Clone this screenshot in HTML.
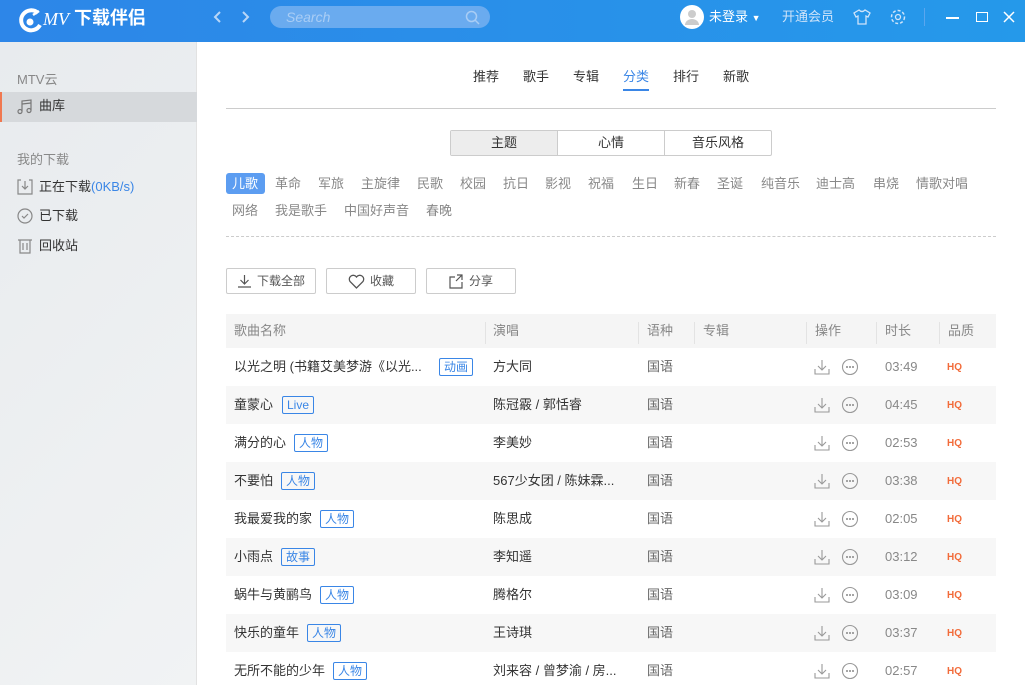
<!DOCTYPE html><html><head><meta charset="utf-8"><style>
*{margin:0;padding:0;box-sizing:border-box}
body{width:1025px;height:685px;overflow:hidden;font-family:"Liberation Sans","Noto Sans CJK SC",sans-serif;font-size:13px;line-height:16px;color:#333;background:#fff;position:relative}
.abs{position:absolute}
#top{left:0;top:0;width:1025px;height:42px;background:linear-gradient(90deg,#2d86e8,#2599ea);color:#fff}
#side{left:0;top:42px;width:197px;height:643px;background:linear-gradient(135deg,#e8ebee,#f1f3f4);border-right:1px solid #e2e2e2}
.t{position:absolute;white-space:nowrap}
.tag{position:absolute;color:#888;font-size:13px}
.btn{position:absolute;top:268px;height:26px;border:1px solid #ccc;border-radius:2px;font-size:12px;color:#555;display:flex;align-items:center;justify-content:center;gap:5px}
.row{position:absolute;left:226px;width:770px;height:38px}
.row span{position:absolute;top:11px;white-space:nowrap}
.row svg{position:absolute}
.badge{border:1px solid #3a86e6;color:#3a86e6;border-radius:2px;font-size:12px;padding:0 4px;line-height:16px;top:10px!important}
.hq{color:#f26b3a;font-size:10px;font-weight:bold}
.sep{position:absolute;top:322px;width:1px;height:22px;background:#e3e3e3}
</style></head><body>
<div id="top" class="abs">
<svg class="abs" style="left:16px;top:7px" width="28" height="28" viewBox="0 0 28 28"><path d="M22 6A10 10 0 1 0 24 18" fill="none" stroke="#fff" stroke-width="4"/><circle cx="14" cy="15" r="3.5" fill="#fff"/><path d="M17 8l6-4" stroke="#fff" stroke-width="2.5"/></svg>
<div class="t" style="left:43px;top:9px;font-size:18px;line-height:20px;font-style:italic;font-family:'Liberation Serif',serif">MV</div>
<div class="t" style="left:74px;top:7px;font-size:18px;line-height:22px;font-weight:bold">下载伴侣</div>
<svg class="abs" style="left:213px;top:10px" width="10" height="14"><path d="M7 2L2 7l5 5" fill="none" stroke="#b8d6f7" stroke-width="2"/></svg>
<svg class="abs" style="left:240px;top:10px" width="10" height="14"><path d="M3 2l5 5-5 5" fill="none" stroke="#b8d6f7" stroke-width="2"/></svg>
<div class="abs" style="left:270px;top:6px;width:220px;height:22px;border-radius:11px;background:#6aabef"></div>
<div class="t" style="left:286px;top:9px;font-style:italic;color:#a9cdf5;font-size:14px">Search</div>
<svg class="abs" style="left:465px;top:10px" width="15" height="15"><circle cx="6.5" cy="6.5" r="5" fill="none" stroke="#a9cdf5" stroke-width="1.5"/><path d="M10 10l4 4" stroke="#a9cdf5" stroke-width="1.5"/></svg>
<div class="abs" style="left:680px;top:5px;width:24px;height:24px;border-radius:50%;background:#fff"><svg width="24" height="24"><circle cx="12" cy="9" r="4" fill="#ccc"/><path d="M5 20a7 6 0 0 1 14 0z" fill="#ccc"/></svg></div>
<div class="t" style="left:709px;top:9px">未登录 <span style="font-size:9px">▼</span></div>
<div class="t" style="left:782px;top:9px;color:#cfe4fa">开通会员</div>
<svg class="abs" style="left:853px;top:8px" width="18" height="17"><path d="M6 2l-5 3 2 4 2-1v8h8V8l2 1 2-4-5-3q-3 3-6 0z" fill="none" stroke="#cfe4fa" stroke-width="1.3"/></svg>
<svg class="abs" style="left:889px;top:8px" width="18" height="18"><circle cx="9" cy="9" r="6.5" fill="none" stroke="#cfe4fa" stroke-width="1.5" stroke-dasharray="3 2"/><circle cx="9" cy="9" r="2.5" fill="none" stroke="#cfe4fa" stroke-width="1.3"/></svg>
<div class="abs" style="left:924px;top:8px;width:1px;height:18px;background:#5aa6ef"></div>
<div class="abs" style="left:946px;top:17px;width:13px;height:1.5px;background:#fff"></div>
<div class="abs" style="left:976px;top:12px;width:12px;height:10px;border:1.5px solid #fff"></div>
<svg class="abs" style="left:1003px;top:11px" width="12" height="12"><path d="M1 1l10 10M11 1L1 11" stroke="#fff" stroke-width="1.5"/></svg>
</div>
<div id="side" class="abs">
<div class="t" style="left:17px;top:30px;color:#888;font-size:13px">MTV云</div>
<div class="abs" style="left:0;top:50px;width:197px;height:30px;background:#d6d9dc;border-left:2px solid #f07850"></div>
<svg class="abs" style="left:17px;top:57px" width="16" height="16"><path d="M5 12V2l9-1v10" fill="none" stroke="#777" stroke-width="1.2"/><path d="M5 5l9-1" stroke="#777" stroke-width="1.2"/><circle cx="3" cy="12.5" r="2" fill="none" stroke="#777" stroke-width="1.2"/><circle cx="12" cy="11.5" r="2" fill="none" stroke="#777" stroke-width="1.2"/></svg>
<div class="t" style="left:39px;top:56px">曲库</div>
<div class="t" style="left:17px;top:110px;color:#888">我的下载</div>
<svg class="abs" style="left:17px;top:137px" width="16" height="16"><path d="M1 5v10h14V5M8 2v8M5 7l3 3 3-3" fill="none" stroke="#888" stroke-width="1.2"/><path d="M1 5V1h3M15 5V1h-3" fill="none" stroke="#888" stroke-width="1.2"/></svg>
<div class="t" style="left:39px;top:137px">正在下载<span style="color:#3a86e6">(0KB/s)</span></div>
<svg class="abs" style="left:17px;top:166px" width="16" height="16"><circle cx="8" cy="8" r="7" fill="none" stroke="#888" stroke-width="1.2"/><path d="M5 8l2 2 4-4" fill="none" stroke="#888" stroke-width="1.2"/></svg>
<div class="t" style="left:39px;top:166px">已下载</div>
<svg class="abs" style="left:17px;top:196px" width="16" height="16"><path d="M1 2h14M3 2v13h10V2M6 5v7M10 5v7" fill="none" stroke="#888" stroke-width="1.2"/></svg>
<div class="t" style="left:39px;top:196px">回收站</div>
</div>
<div class="t" style="left:473px;top:69px">推荐</div><div class="t" style="left:523px;top:69px">歌手</div><div class="t" style="left:573px;top:69px">专辑</div><div class="t" style="left:623px;top:69px;color:#3a86e6">分类</div><div class="abs" style="left:623px;top:89px;width:26px;height:2px;background:#3a86e6"></div><div class="t" style="left:673px;top:69px">排行</div><div class="t" style="left:723px;top:69px">新歌</div>
<div class="abs" style="left:226px;top:108px;width:770px;height:1px;background:#ccc"></div>
<div class="abs" style="left:450px;top:130px;width:322px;height:26px;border:1px solid #ccc;border-radius:2px;display:flex;font-size:13px">
<div style="flex:1;background:#ededed;text-align:center;line-height:24px;border-right:1px solid #ccc">主题</div><div style="flex:1;text-align:center;line-height:24px;border-right:1px solid #ccc">心情</div><div style="flex:1;text-align:center;line-height:24px">音乐风格</div></div>
<div class="abs" style="left:226px;top:173px;width:39px;height:21px;background:#5c9df1;border-radius:3px"></div>
<div class="tag" style="left:232px;top:176px;color:#fff">儿歌</div>
<div class="tag" style="left:275px;top:176px">革命</div><div class="tag" style="left:318px;top:176px">军旅</div><div class="tag" style="left:361px;top:176px">主旋律</div><div class="tag" style="left:417px;top:176px">民歌</div><div class="tag" style="left:460px;top:176px">校园</div><div class="tag" style="left:503px;top:176px">抗日</div><div class="tag" style="left:545px;top:176px">影视</div><div class="tag" style="left:588px;top:176px">祝福</div><div class="tag" style="left:632px;top:176px">生日</div><div class="tag" style="left:674px;top:176px">新春</div><div class="tag" style="left:717px;top:176px">圣诞</div><div class="tag" style="left:761px;top:176px">纯音乐</div><div class="tag" style="left:816px;top:176px">迪士高</div><div class="tag" style="left:873px;top:176px">串烧</div><div class="tag" style="left:916px;top:176px">情歌对唱</div>
<div class="tag" style="left:232px;top:203px">网络</div><div class="tag" style="left:275px;top:203px">我是歌手</div><div class="tag" style="left:344px;top:203px">中国好声音</div><div class="tag" style="left:426px;top:203px">春晚</div>
<div class="abs" style="left:226px;top:236px;width:770px;border-top:1px dashed #ccc"></div>
<div class="btn" style="left:226px;width:90px"><svg width="15" height="14"><path d="M7.5 1v9M3.5 6l4 4 4-4M1 13h13" fill="none" stroke="#555" stroke-width="1.2"/></svg>下载全部</div>
<div class="btn" style="left:326px;width:90px"><svg width="17" height="15"><path d="M8.5 14L2 7.5A3.6 3.6 0 0 1 8.5 3a3.6 3.6 0 0 1 6.5 4.5z" fill="none" stroke="#555" stroke-width="1.3"/></svg> 收藏</div>
<div class="btn" style="left:426px;width:90px"><svg width="15" height="15"><path d="M6 3H1v11h12V8M8 1h5v5M13 1L7 7" fill="none" stroke="#555" stroke-width="1.2"/></svg> 分享</div>
<div class="abs" style="left:226px;top:314px;width:770px;height:34px;background:#f5f5f5"></div>
<div class="t" style="left:234px;top:323px;color:#888">歌曲名称</div><div class="t" style="left:493px;top:323px;color:#888">演唱</div><div class="t" style="left:647px;top:323px;color:#888">语种</div><div class="t" style="left:703px;top:323px;color:#888">专辑</div><div class="t" style="left:815px;top:323px;color:#888">操作</div><div class="t" style="left:885px;top:323px;color:#888">时长</div><div class="t" style="left:948px;top:323px;color:#888">品质</div>
<div class="sep" style="left:485px"></div><div class="sep" style="left:638px"></div><div class="sep" style="left:694px"></div><div class="sep" style="left:806px"></div><div class="sep" style="left:876px"></div><div class="sep" style="left:939px"></div>
<div id="rows"></div>
<script>
var d=[["以光之明 (书籍艾美梦游《以光...","动画","方大同","03:49",213],["童蒙心","Live","陈冠霰 / 郭恬睿","04:45",56],["满分的心","人物","李美妙","02:53",68],["不要怕","人物","567少女团 / 陈妹霖...","03:38",55],["我最爱我的家","人物","陈思成","02:05",94],["小雨点","故事","李知遥","03:12",55],["蜗牛与黄鹂鸟","人物","腾格尔","03:09",94],["快乐的童年","人物","王诗琪","03:37",81],["无所不能的少年","人物","刘来容 / 曾梦渝 / 房...","02:57",107]];
var h="";d.forEach(function(r,i){var y=348+i*38;h+='<div class="row" style="top:'+y+'px;background:'+(i%2?'#f7f7f7':'#fff')+'"><span style="left:8px">'+r[0]+'</span><span class="badge" style="left:'+r[4]+'px">'+r[1]+'</span><span style="left:267px">'+r[2]+'</span><span style="left:421px;color:#666">国语</span><svg style="left:588px;top:11px" width="16" height="16"><path d="M8 1v10M4 7l4 4 4-4M1 10v5h14v-5" fill="none" stroke="#999" stroke-width="1.1"/></svg><svg style="left:615px;top:10px" width="18" height="18"><circle cx="9" cy="9" r="7.5" fill="none" stroke="#999" stroke-width="1.1"/><circle cx="6" cy="9" r="1" fill="#888"/><circle cx="9" cy="9" r="1" fill="#888"/><circle cx="12" cy="9" r="1" fill="#888"/></svg><span style="left:659px;color:#888">'+r[3]+'</span><span class="hq" style="left:721px;top:12px">HQ</span></div>'});
document.getElementById("rows").innerHTML=h;
</script>
</body></html>
